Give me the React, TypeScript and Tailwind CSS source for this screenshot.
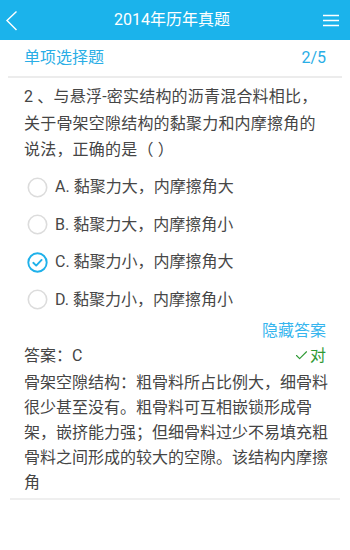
import { Check } from 'lucide-react';

const options = [
  { key: 'A', text: '黏聚力大，内摩擦角大' },
  { key: 'B', text: '黏聚力大，内摩擦角小' },
  { key: 'C', text: '黏聚力小，内摩擦角大' },
  { key: 'D', text: '黏聚力小，内摩擦角小' },
];

const analysis = [
  '骨架空隙结构：粗骨料所占比例大，细骨料',
  '很少甚至没有。粗骨料可互相嵌锁形成骨',
  '架，嵌挤能力强；但细骨料过少不易填充粗',
  '骨料之间形成的较大的空隙。该结构内摩擦',
  '角',
];

function Radio({ checked }: { checked: boolean }) {
  if (checked) {
    return (
      <svg width="21" height="21" viewBox="0 0 21 21" className="shrink-0">
        <circle cx="10.5" cy="10.5" r="9.2" fill="none" stroke="#1fb1ea" strokeWidth="1.9" />
        <path d="M6.3 10.8 L9.2 13.6 L14.6 7.9" fill="none" stroke="#1fb1ea" strokeWidth="1.9" strokeLinecap="round" strokeLinejoin="round" />
      </svg>
    );
  }
  return (
    <svg width="21" height="21" viewBox="0 0 21 21" className="shrink-0">
      <circle cx="10.5" cy="10.5" r="9.2" fill="none" stroke="#dcdcdc" strokeWidth="1.6" />
    </svg>
  );
}

export default function App() {
  return (
    <div
      className="w-[350px] h-[550px] bg-white text-[#444]"
      style={{ fontFamily: 'Roboto, "Noto Sans CJK SC", sans-serif' }}
    >
      <header className="h-10 bg-[#1bb3eb] flex items-center justify-between text-white">
        <svg width="22" height="40" viewBox="0 0 22 40" className="ml-[2px]">
          <path d="M14.5 11.5 L5 20.5 L14.5 30" fill="none" stroke="#fff" strokeWidth="1.4" />
        </svg>
        <h1 className="text-[16px]">2014年历年真题</h1>
        <svg width="24" height="40" viewBox="0 0 24 40" className="mr-[6px]">
          <path d="M3 15.5 H19 M3 20.5 H19 M3 25.5 H19" stroke="#fff" strokeWidth="1.3" />
        </svg>
      </header>

      <div className="h-9 px-6 flex items-center justify-between text-[#2aaee6] text-[16px]">
        <span>单项选择题</span>
        <span>2/5</span>
      </div>
      <div className="mx-2 h-[2px] bg-[#ececec]" />

      <p className="px-6 pt-[6px] text-[16px] leading-[26.5px] tracking-[0.2px] text-[#454545]">
        2 、与悬浮-密实结构的沥青混合料相比，关于骨架空隙结构的黏聚力和内摩擦角的说法，正确的是（ ）
      </p>

      <ul className="mt-[5px] px-[27px]">
        {options.map((o) => (
          <li key={o.key} className="h-[37.5px] flex items-center gap-[7px] text-[16px] text-[#474747]">
            <Radio checked={o.key === 'C'} />
            <span>
              {o.key}. {o.text}
            </span>
          </li>
        ))}
      </ul>

      <div className="px-6 mt-[2px] flex justify-end text-[16px] leading-5 text-[#36b5ee]">
        隐藏答案
      </div>
      <div className="px-6 mt-[5px] flex items-center justify-between text-[16px] leading-5">
        <span>答案：C</span>
        <span className="flex items-center gap-[1px] text-[#2f9a35]">
          <Check size={15} strokeWidth={1.8} />
          对
        </span>
      </div>
      <div className="px-6 mt-[4px] text-[16px] leading-[25px] text-[#454545]">
        {analysis.map((line) => (
          <p key={line} className="whitespace-nowrap">
            {line}
          </p>
        ))}
      </div>
      <div className="mx-[10px] mt-[3px] h-[2px] bg-[#efefef]" />
    </div>
  );
}
